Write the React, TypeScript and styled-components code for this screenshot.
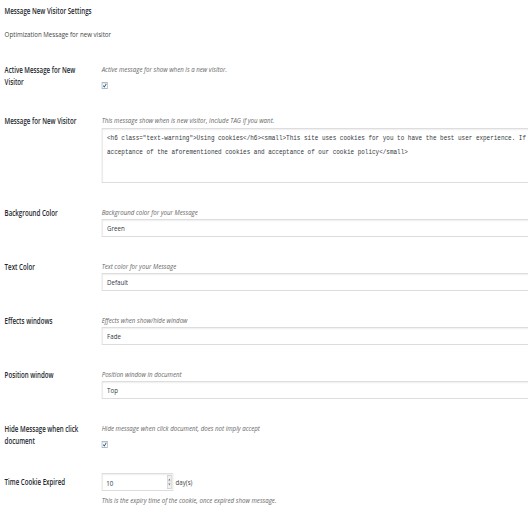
import React from "react"
import styled, { createGlobalStyle } from "styled-components"

// the settings screen is laid out at its natural width and squeezed horizontally
const SQUEEZE = 0.77

const GlobalStyle = createGlobalStyle`
  html, body {
    margin: 0;
    padding: 0;
    background: #fff;
    overflow: hidden;
  }
  body {
    font-family: "Open Sans", "Liberation Sans", sans-serif;
    color: #23282d;
  }
`

const Page = styled.div`
  width: ${528 / SQUEEZE}px;
  height: 528px;
  box-sizing: border-box;
  padding: 5px 0 0 6px;
  transform: scaleX(${SQUEEZE});
  transform-origin: 0 0;
  font-size: 8px;
  line-height: 12px;
`

const Heading = styled.h2`
  margin: 0;
  font-size: 8px;
  line-height: 12px;
  font-weight: 600;
  color: #23282d;
`

const Intro = styled.p`
  margin: 11px 0 11px;
  font-size: 8px;
  line-height: 12px;
  color: #444;
`

const FormTable = styled.div`
  display: flex;
  flex-direction: column;
`

const Row = styled.div`
  display: grid;
  grid-template-columns: 126px 1fr;
  padding: 12px 0 11px;
  align-items: start;
`

const Label = styled.div<{ $tall?: boolean }>`
  padding: ${(p) => (p.$tall ? "0" : "1px")} 16px 0 0;
  font-weight: 600;
  line-height: ${(p) => (p.$tall ? "18px" : "12px")};
  color: #23282d;
`

const Cell = styled.div`
  display: flex;
  flex-direction: column;
  align-items: flex-start;
  min-width: 0;
`

const Description = styled.div<{ $gap?: number }>`
  margin-top: ${(p) => p.$gap ?? 0}px;
  font-style: italic;
  line-height: 12px;
  color: #666;
`

const CheckLine = styled.div`
  display: flex;
  align-items: center;
  height: 12px;
  margin-top: 4px;
`

const CheckBox = styled.span`
  display: inline-flex;
  align-items: center;
  justify-content: center;
  width: 8px;
  height: 7px;
  box-sizing: border-box;
  border: 1px solid #b4b9be;
  background: #fff;
  box-shadow: inset 0 1px 1px rgba(0, 0, 0, 0.1);

  svg {
    display: block;
  }
`

const fieldBox = `
  box-sizing: border-box;
  border: 1px solid #ddd;
  box-shadow: inset 0 1px 2px rgba(0, 0, 0, 0.07);
  background: #fff;
  color: #32373c;
  outline: none;
  margin: 0;
`

const Code = styled.textarea`
  ${fieldBox}
  display: block;
  width: 700px;
  height: 55px;
  margin-top: 2px;
  padding: 2px 6px;
  font-family: "Liberation Mono", "DejaVu Sans Mono", monospace;
  font-size: 7.75px;
  line-height: 14px;
  white-space: pre;
  overflow: hidden;
  resize: none;
`

const Select = styled.select`
  ${fieldBox}
  appearance: none;
  display: block;
  width: 700px;
  height: 18px;
  margin-top: 1px;
  padding: 0 6px;
  font-family: "Open Sans", "Liberation Sans", sans-serif;
  font-size: 8px;
  line-height: 16px;
`

const NumberLine = styled.div`
  display: flex;
  align-items: center;
  gap: 3px;
`

const NumberBox = styled.div`
  position: relative;
`

const NumberInput = styled.input`
  ${fieldBox}
  display: block;
  width: 93px;
  height: 18px;
  padding: 0 5px;
  font-family: "Open Sans", "Liberation Sans", sans-serif;
  font-size: 8px;
`

const Spinner = styled.span`
  position: absolute;
  top: 2px;
  right: 2px;
  width: 6px;
  height: 14px;
  box-sizing: border-box;
  border: 1px solid #d4d4d4;
  background: #f3f3f3;

  svg {
    display: block;
  }
`

const Unit = styled.span`
  color: #444;
  line-height: 18px;
`

const Tick = () => (
  <svg width="6" height="5" viewBox="0 0 6 5">
    <path d="M1 2.6 L2.5 4 L5 0.8" fill="none" stroke="#1e5f9e" strokeWidth="1.1" />
  </svg>
)

const SpinArrows = () => (
  <svg width="4" height="12" viewBox="0 0 4 12">
    <path d="M0.5 4.5 L2 2.5 L3.5 4.5 Z" fill="#777" />
    <path d="M0.5 7.5 L2 9.5 L3.5 7.5 Z" fill="#777" />
    <line x1="0" y1="6" x2="4" y2="6" stroke="#d4d4d4" strokeWidth="0.6" />
  </svg>
)

const cookieMessage =
  '<h6 class="text-warning">Using cookies</h6><small>This site uses cookies for you to have the best user experience. If you continue browsing you are giving your consent for the\n' +
  "acceptance of the aforementioned cookies and acceptance of our cookie policy</small>"

const selectFields = [
  { label: "Background Color", help: "Background color for your Message", value: "Green" },
  { label: "Text Color", help: "Text color for your Message", value: "Default" },
  { label: "Effects windows", help: "Effects when show/hide window", value: "Fade" },
  { label: "Position window", help: "Position window in document", value: "Top" },
]

const App = () => {
  return (
    <>
      <GlobalStyle />
      <Page>
        <Heading>Message New Visitor Settings</Heading>
        <Intro>Optimization Message for new visitor</Intro>

        <FormTable>
          <Row>
            <Label>Active Message for New Visitor</Label>
            <Cell>
              <Description>Active message for show when is a new visitor.</Description>
              <CheckLine>
                <CheckBox>
                  <Tick />
                </CheckBox>
              </CheckLine>
            </Cell>
          </Row>

          <Row>
            <Label>Message for New Visitor</Label>
            <Cell>
              <Description>This message show when is new visitor, include TAG if you want.</Description>
              <Code readOnly wrap="off" defaultValue={cookieMessage} />
            </Cell>
          </Row>

          {selectFields.map((field) => (
            <Row key={field.label}>
              <Label>{field.label}</Label>
              <Cell>
                <Description>{field.help}</Description>
                <Select defaultValue={field.value}>
                  <option>{field.value}</option>
                </Select>
              </Cell>
            </Row>
          ))}

          <Row>
            <Label>Hide Message when click document</Label>
            <Cell>
              <Description>Hide message when click document, does not imply accept</Description>
              <CheckLine>
                <CheckBox>
                  <Tick />
                </CheckBox>
              </CheckLine>
            </Cell>
          </Row>

          <Row>
            <Label $tall>Time Cookie Expired</Label>
            <Cell>
              <NumberLine>
                <NumberBox>
                  <NumberInput readOnly defaultValue="10" />
                  <Spinner>
                    <SpinArrows />
                  </Spinner>
                </NumberBox>
                <Unit>day(s)</Unit>
              </NumberLine>
              <Description $gap={3}>
                This is the expiry time of the cookie, once expired show message.
              </Description>
            </Cell>
          </Row>
        </FormTable>
      </Page>
    </>
  )
}

export default App
